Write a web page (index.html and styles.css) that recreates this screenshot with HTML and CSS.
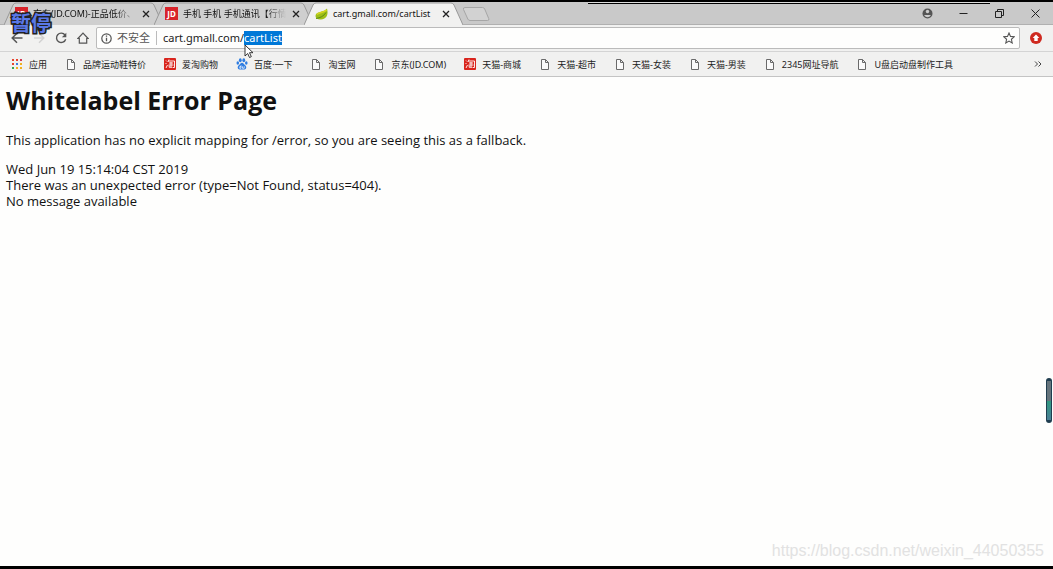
FILE: index.html
```html
<!DOCTYPE html>
<html lang="zh-CN">
<head>
<meta charset="utf-8">
<title>cart.gmall.com/cartList</title>
<link rel="stylesheet" href="styles.css">
</head>
<body>
<svg class="defs" aria-hidden="true">
  <symbol id="doc" viewBox="0 0 12 12"><path d="M2.500 1.500h4l3 3v7h-7zM6.500 1.500v3h3" fill="#fafafa" stroke="#6a6a6a"/></symbol>
  <symbol id="tao" viewBox="0 0 12 12"><rect width="12" height="12" rx="1" fill="#d9251d"/><path d="M2 2.500l1 1M1.500 5l1 1M2 10l1.500-3M5 1.500L4 4M4.500 3H10.500v6.500H9M5 5h4M4.500 7h5M7 4v5M5.200 7.500V9.300H8.500" fill="none" stroke="#fff" stroke-width=".9"/></symbol>
  <symbol id="tabshape" viewBox="0 0 159 23" preserveAspectRatio="none"><path d="M0 23L9 3Q10 1 12 1H147Q149 1 150 3L159 23"/></symbol>
  <symbol id="close" viewBox="0 0 8 8"><path d="M1 1l6 6M7 1L1 7" stroke="#222" stroke-width="1.300"/></symbol>
</svg>
<header class="browser">
  <div class="tabstrip">
    <div class="tab">
      <svg class="tab-bg"><use href="#tabshape"/></svg>
      <span class="jd">JD</span><span class="tab-title fade">京东(JD.COM)-正品低价、</span>
      <button class="tab-close" aria-label="关闭"><svg><use href="#close"/></svg></button>
    </div>
    <div class="tab">
      <svg class="tab-bg"><use href="#tabshape"/></svg>
      <span class="jd">JD</span><span class="tab-title fade">手机 手机 手机通讯【行情</span>
      <button class="tab-close" aria-label="关闭"><svg><use href="#close"/></svg></button>
    </div>
    <div class="tab active">
      <svg class="tab-bg"><use href="#tabshape"/></svg>
      <svg class="leaf" viewBox="0 0 13 12"><path d="M12 .5C13.500 6 12 11 6 11.500 3 11.800.5 10.500.5 8 .5 3 9 4.500 12 .5z" fill="#9ebf16"/><path d="M1 10.500C5 10 9 8 11 4.500" fill="none" stroke="#5e8c12"/><path d="M2 6.500C4 4 9 5 11.500 2" fill="none" stroke="#d6d620" stroke-width="1.500"/></svg>
      <span class="tab-title">cart.gmall.com/cartList</span>
      <button class="tab-close" aria-label="关闭"><svg><use href="#close"/></svg></button>
    </div>
    <button class="newtab" aria-label="新标签页"><svg viewBox="0 0 28 14"><path d="M3 .5h17.500q1.500 0 2.200 1.500l4 9.500q.8 2-1 2H8q-1.500 0-2.200-1.500L1.500 2.500Q.8.5 3 .5z" fill="#d2d2d2" stroke="#a6a6a6"/></svg></button>
    <div class="window-controls">
      <button aria-label="用户"><svg viewBox="0 0 11 11"><circle cx="5.500" cy="5.500" r="5" fill="#555"/><circle cx="5.500" cy="3.500" r="1.700" fill="#ccc"/><path d="M2 7h7q-1.500 2.300-3.500 2.300T2 7z" fill="#ccc"/></svg></button>
      <button aria-label="最小化"><svg viewBox="0 0 11 11"><path d="M1.500 5.500h8" stroke="#222"/></svg></button>
      <button aria-label="还原"><svg viewBox="0 0 11 11"><path d="M1.500 3.500h6v6h-6zM3.500 3.500v-2h6v6h-2" fill="none" stroke="#222"/></svg></button>
      <button aria-label="关闭窗口"><svg viewBox="0 0 11 11"><path d="M1.500 1.500l8 8M9.500 1.500l-8 8" stroke="#222"/></svg></button>
    </div>
    <span class="recorder-line"></span>
  </div>
  <div class="toolbar">
    <button class="nav" aria-label="后退"><svg viewBox="0 0 12 12"><path d="M11.500 6H1.500M6 1.200L1.200 6 6 10.800" fill="none" stroke="#555" stroke-width="1.500"/></svg></button>
    <button class="nav" aria-label="前进"><svg viewBox="0 0 12 12"><path d="M1 6h9.500M6 1.200L10.800 6 6 10.800" fill="none" stroke="#d2d2d2" stroke-width="1.500"/></svg></button>
    <button class="nav" aria-label="刷新"><svg viewBox="0 0 12 12"><path d="M10 3A4.700 4.700 0 1 0 10.700 7.200" fill="none" stroke="#555" stroke-width="1.400"/><path d="M11.300.8v4.400H6.900z" fill="#555"/></svg></button>
    <button class="nav" aria-label="主页"><svg viewBox="0 0 12 12"><path d="M2.300 11.200V6.500H.9L6 1.200l5.100 5.300H9.700v4.700z" fill="none" stroke="#555" stroke-width="1.200"/></svg></button>
    <div class="omnibox">
      <svg class="info" viewBox="0 0 11 11"><circle cx="5.500" cy="5.500" r="4.700" fill="none" stroke="#555" stroke-width="1.200"/><path d="M5.500 4.700v3.500M5.500 2.500v1.300" stroke="#555" stroke-width="1.300"/></svg>
      <label class="insecure" for="url">不安全</label>
      <input id="url" class="url" type="text" value="cart.gmall.com/cartList" spellcheck="false">
      <button class="star" aria-label="收藏"><svg viewBox="0 0 12 12"><path d="M6 1l1.500 3.400 3.700.4-2.800 2.500.8 3.700L6 9.100 2.800 11l.8-3.700L.8 4.800l3.700-.4z" fill="none" stroke="#555" stroke-width="1.100"/></svg></button>
    </div>
    <button class="update" aria-label="更新"><svg viewBox="0 0 12 12"><circle cx="6" cy="6" r="6" fill="#cf2a20"/><path d="M6 2.500L9.300 6H7.700v3H4.300V6H2.700z" fill="#fff"/></svg></button>
  </div>
  <nav class="bookmarks">
    <a href="#"><svg viewBox="0 0 12 12"><path d="M1 1h2v2H1zM5 1h2v2H5zM1 5h2v2H1z" fill="#e8432e"/><path d="M9 1h2v2H9z" fill="#d13a55"/><path d="M5 5h2v2H5z" fill="#3b7de0"/><path d="M9 5h2v2H9zM5 9h2v2H5zM9 9h2v2H9z" fill="#f2b01e"/><path d="M1 9h2v2H1z" fill="#35a552"/></svg>应用</a>
    <a href="#"><svg><use href="#doc"/></svg>品牌运动鞋特价</a>
    <a href="#"><svg><use href="#tao"/></svg>爱淘购物</a>
    <a href="#"><svg viewBox="0 0 12 12"><g fill="#2f7de1"><ellipse cx="4.300" cy="2.300" rx="1.400" ry="2"/><ellipse cx="7.800" cy="2.300" rx="1.400" ry="2"/><ellipse cx="1.800" cy="5" rx="1.300" ry="1.700"/><ellipse cx="10.300" cy="5" rx="1.300" ry="1.700"/><path d="M6 4.800c1.500 0 2 1.500 3.200 2.500 2 1.800.9 4.200-.7 4.200H3.500c-1.600 0-2.700-2.400-.7-4.200C4 6.300 4.500 4.800 6 4.800z"/></g><path d="M5 7.300v3H3.800v-1.700H5M6.500 8.300v2h1.700v-2" fill="none" stroke="#fff" stroke-width=".7"/></svg>百度·一下</a>
    <a href="#"><svg><use href="#doc"/></svg>淘宝网</a>
    <a href="#"><svg><use href="#doc"/></svg>京东(JD.COM)</a>
    <a href="#"><svg><use href="#tao"/></svg>天猫-商城</a>
    <a href="#"><svg><use href="#doc"/></svg>天猫-超市</a>
    <a href="#"><svg><use href="#doc"/></svg>天猫-女装</a>
    <a href="#"><svg><use href="#doc"/></svg>天猫-男装</a>
    <a href="#"><svg><use href="#doc"/></svg>2345网址导航</a>
    <a href="#"><svg><use href="#doc"/></svg>U盘启动盘制作工具</a>
    <button class="more" aria-label="更多书签"><svg viewBox="0 0 12 12"><path d="M3 3.500L5.500 6 3 8.500M6.500 3.500L9 6 6.500 8.500" fill="none" stroke="#444"/></svg></button>
  </nav>
</header>
<main class="page">
  <h1>Whitelabel Error Page</h1>
  <p>This application has no explicit mapping for /error, so you are seeing this as a fallback.</p>
  <div>Wed Jun 19 15:14:04 CST 2019</div>
  <div>There was an unexpected error (type=Not Found, status=404).</div>
  <div>No message available</div>
</main>
<div class="paused">暂停</div>
<svg class="cursor" viewBox="0 0 10 15"><path d="M1 1v11l2.700-2.500 1.800 4 1.800-.8-1.800-4H9z" fill="#fff" stroke="#222" stroke-width=".9"/></svg>
<div class="meter"><span></span></div>
<div class="watermark">https://blog.csdn.net/weixin_44050355</div>
<script src="script.js"></script>
</body>
</html>
```
FILE: styles.css
```css
* { box-sizing: border-box; }
body {
  margin: 0;
  min-height: 100vh;
  display: flex;
  flex-direction: column;
  position: relative;
  border-top: 2px solid #000;
  border-bottom: 3px solid #000;
  background: #fefefd;
  color: #111;
  font-family: "Noto Sans", "Noto Sans CJK SC", sans-serif;
  overflow: hidden;
}
button { border: 0; padding: 0; background: none; font: inherit; color: inherit; display: flex; }
.defs { position: absolute; width: 0; height: 0; }

.tabstrip {
  display: flex;
  align-items: flex-end;
  height: 23px;
  padding-left: 4px;
  background: #c9c9c9;
  border-bottom: 1px solid #b0b0b0;
  position: relative;
  font-size: 9px;
}
.tab {
  position: relative;
  display: flex;
  align-items: center;
  width: 159px;
  height: 23px;
  margin-right: -9px;
  margin-bottom: -1px;
  padding: 0 12px 0 11px;
  gap: 5px;
}
.tab > * { position: relative; }
.tab .tab-bg { position: absolute; left: 0; top: 0; width: 100%; height: 100%; fill: #cfcfcf; stroke: #999; }
.tab.active { z-index: 1; }
.tab.active .tab-bg { fill: #f1f1f0; }
.jd {
  flex: none;
  width: 13px;
  height: 13px;
  background: #d8232a;
  color: #fff;
  font-size: 8px;
  font-weight: bold;
  line-height: 13px;
  text-align: center;
}
.leaf { flex: none; width: 13px; height: 12px; }
.tab-title { flex: 1; min-width: 0; overflow: hidden; white-space: nowrap; line-height: 16px; }
.fade { mask-image: linear-gradient(90deg, #000 80%, transparent); }
.tab-close svg { width: 8px; height: 8px; }
.tab-close { padding: 1px; }
.newtab { margin: 0 0 3px 8px; align-self: flex-end; }
.newtab svg { width: 28px; height: 14px; }
.window-controls { margin-left: auto; display: flex; gap: 25px; padding-right: 12px; height: 22px; align-items: center; }
.window-controls svg { width: 11px; height: 11px; }
.recorder-line { position: absolute; top: 0; left: 588px; right: 63px; height: 2px; border-top: 1px solid #ddd; border-bottom: 1px solid #000; }

.toolbar {
  display: flex;
  align-items: center;
  gap: 10px;
  height: 26px;
  padding: 2px 11px;
  background: #f1f1f0;
}
.nav svg, .update svg, .star svg { width: 12px; height: 12px; }
.omnibox {
  flex: 1;
  display: flex;
  align-items: center;
  height: 22px;
  margin-left: -3px;
  padding: 0 4px;
  background: #fefefd;
  border: 1px solid #bbb;
  border-radius: 2px;
}
.info { width: 11px; height: 11px; }
.insecure { margin: 0 6px 0 5px; padding-right: 6px; border-right: 1px solid #bbb; color: #555; font-size: 11px; line-height: 14px; }
.url { flex: 1; min-width: 0; border: 0; outline: 0; padding: 0; background: none; font: 11px/14px "Noto Sans", sans-serif; color: #222; caret-color: transparent; }
.url::selection { background: #0078d7; color: #fff; }

.bookmarks {
  display: flex;
  align-items: center;
  gap: 18px;
  height: 26px;
  padding: 0 9px 0 11px;
  background: #f1f1f0;
  border-top: 1px solid #d4d4d4;
  border-bottom: 1px solid #c4c4c4;
  font-size: 9px;
  white-space: nowrap;
}
.bookmarks a { display: flex; align-items: center; gap: 6px; color: #222; text-decoration: none; }
.bookmarks svg { width: 12px; height: 12px; }
.more { margin-left: auto; }

.page { flex: 1; padding: 7px 6px; font: 13px/16px "Open Sans", sans-serif; }
.page h1 { margin: 0 0 16px; font-size: 25px; line-height: 32px; }
.page p { margin: 0 0 13px; }

.paused {
  position: absolute;
  z-index: 2;
  left: 11px;
  top: 8px;
  font: bold 20px/26px "Noto Sans CJK SC", sans-serif;
  color: #5a78e8;
  -webkit-text-stroke: 3px #222;
  paint-order: stroke fill;
}
.cursor { position: absolute; z-index: 2; left: 244px; top: 42px; width: 10px; height: 15px; }
.meter { position: absolute; right: 1px; top: 376px; width: 6px; height: 45px; padding: 3px 1px; border-radius: 3px; background: #203e50; display: flex; }
.meter span { flex: 1; background: linear-gradient(#66747c 50%, #2f9a80 50%, #4a7f96); }
.watermark { position: absolute; right: 9px; bottom: 6px; font: 16px/18px "Liberation Sans", sans-serif; color: #e2e2e2; }
```
FILE: script.js
```js
// Focus the address bar with the path part selected.
const url = document.getElementById("url");
url.focus();
url.setSelectionRange(url.value.indexOf("/") + 1, url.value.length);
```
